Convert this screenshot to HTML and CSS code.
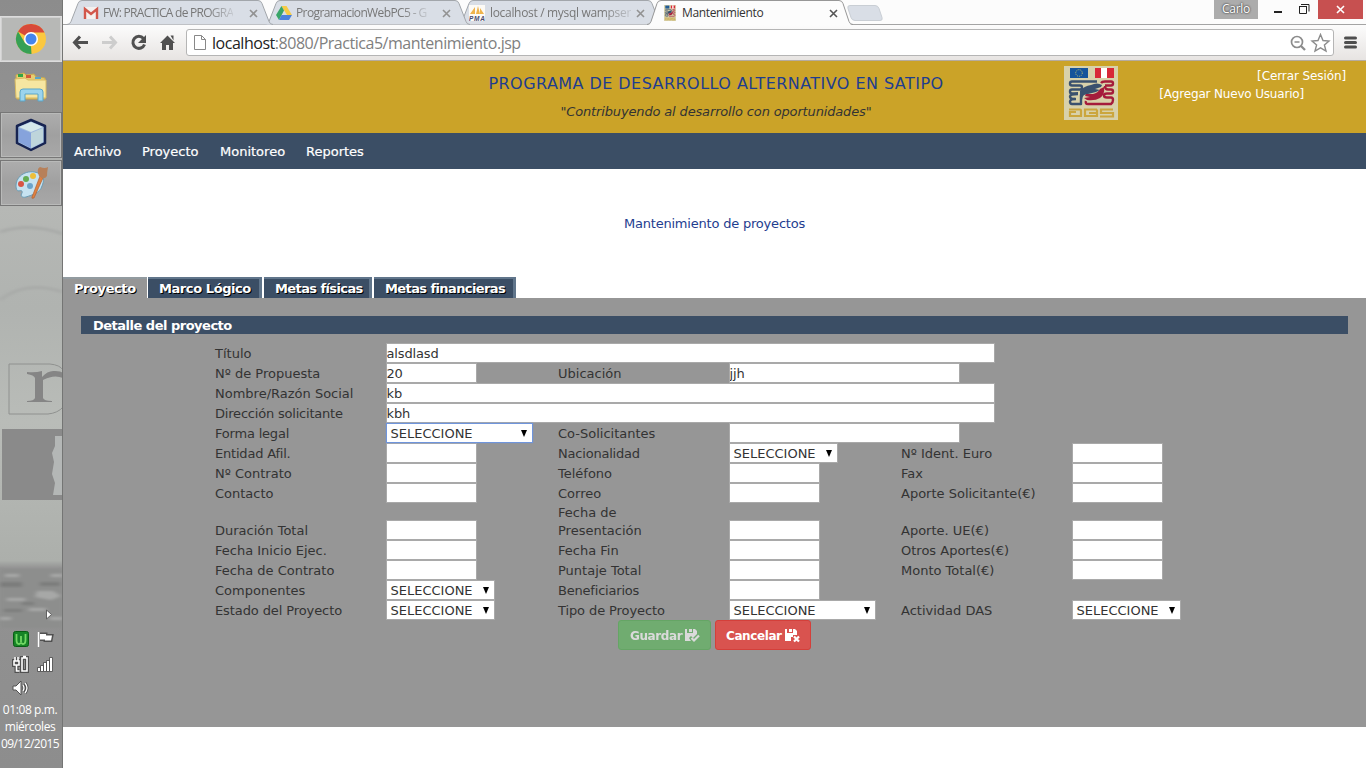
FILE: index.html
```html
<!DOCTYPE html>
<html lang="es">
<head>
<meta charset="utf-8">
<title>Mantenimiento</title>
<link rel="stylesheet" href="styles.css">
</head>
<body>
<aside class="taskbar">
  <svg class="wallpaper" viewBox="0 0 63 768" width="63" height="768">
    <defs>
      <linearGradient id="wp" x1="0" y1="0" x2="0" y2="1"><stop offset="0" stop-color="#8c8c8c"/><stop offset=".15" stop-color="#929292"/><stop offset=".17" stop-color="#adaeac"/><stop offset=".27" stop-color="#b6b8b5"/><stop offset=".4" stop-color="#b0b3b0"/><stop offset=".55" stop-color="#b9bcb8"/><stop offset=".73" stop-color="#acafab"/><stop offset=".74" stop-color="#929292"/><stop offset="1" stop-color="#8d8d8d"/></linearGradient>
      <filter id="soft" x="-20%" y="-50%" width="140%" height="200%"><feGaussianBlur stdDeviation="2.2 1"/></filter>
      <filter id="soft1"><feGaussianBlur stdDeviation=".5"/></filter>
    </defs>
    <rect width="63" height="768" fill="url(#wp)"/>
    <g fill="none" stroke="#a8aaa8" stroke-width="3" filter="url(#soft)"><path d="M0 232Q30 222 63 234M0 300Q25 280 63 292"/></g>
    <g filter="url(#soft1)">
      <path d="M9 364H50Q60 365 63 370M9 364V414H48Q58 413 63 407" fill="none" stroke="#8f918f"/>
      <path d="M27 372q8 1 15-1v6q6-7 13-6q6 0 8 2v5q-9-4-20 2v18q1 3 9 3v1H27v-1q7 0 8-3v-20q-1-3-8-4z" fill="#858585"/>
      <path d="M2 429H63V500H2z" fill="#8a8a8a"/>
      <path d="M55 436h8v59H53l2-12-3-9 2-12-2-9 3-7z" fill="#b4b7b6"/>
    </g>
    <g filter="url(#soft)">
      <path d="M0 569H63V628H0z" fill="#8d8e8d"/>
      <path d="M5 574h14v3H5zM51 574h12v3H51zM37 591h16l8 5-10 4-16-3zM7 598h18v3H7zM29 608h17v3H29zM0 617h11v3H0zM50 617h13v3H50z" fill="#a7a8a7"/>
      <path d="M0 582h22v5H0zM40 582h20v4H40zM22 602h12v3H22zM4 609h18v3H4z" fill="#7c7d7c"/>
    </g>
    <path d="M62.500 0V768" stroke="#747574"/>
  </svg>
  <div class="launchers">
    <div class="launcher launcher-active"><svg width="32" height="32" viewBox="0 0 32 32"><circle cx="16" cy="16" r="15" fill="#fbc840"/><path d="M16 16 3 8.500A15 15 0 0 1 29.500 9.500H16z" fill="#d84a3a"/><path d="M3 8.500 10 20l6 3.500L16.500 31A15 15 0 0 1 3 8.500z" fill="#36a055"/><circle cx="16" cy="16" r="7" fill="#fff"/><circle cx="16" cy="16" r="5.500" fill="#4585ec"/></svg></div>
    <div class="launcher launcher-plain"><svg width="34" height="32" viewBox="0 0 34 32"><path d="M2 4l8-2 2 2 8-1 2 3 9 1v21H3z" fill="#e8cd72" stroke="#c9a94c"/><path d="M4 3h5v3H4z" fill="#32a546"/><path d="M12 4h5v3h-5z" fill="#d35a3a"/><path d="M21 6h6v2h-6z" fill="#5ca5c7"/><path d="M1 8l10-1 3 2h18v18H2z" fill="#f6e6a1" stroke="#d8ba63"/><path d="M6 30V21q0-3 3-3h17q3 0 3 3v9h-5v-7H11v7z" fill="#9bd4ed" stroke="#5ba6c8"/></svg></div>
    <div class="launcher"><svg width="34" height="34" viewBox="0 0 34 34"><path d="M17 2 31 8V25L17 32 3 25V8z" fill="#9db8dc" stroke="#172452" stroke-width="2.500" stroke-linejoin="round"/><path d="M17 4 29 9 17 14 5 9z" fill="#d5e8eb"/><path d="M5 10 17 15V30L5 24z" fill="#86a3dc"/><path d="M17 15 29 10V24L17 30z" fill="#bed5db"/></svg></div>
    <div class="launcher"><svg width="34" height="34" viewBox="0 0 34 34"><path d="M2 20C2 9 14 3 24 7c7 3 6 8 4 13-2 7-10 9-16 11-4 1-6-1-4-4 1-2-1-3-3-2-2 0-3-2-3-5z" fill="#c6e2f0" stroke="#6a9cb5"/><circle cx="7" cy="18" r="3" fill="#d75546"/><circle cx="12" cy="13" r="3" fill="#65ad54"/><circle cx="19" cy="10" r="3" fill="#edbe39"/><circle cx="16" cy="20" r="3" fill="#6ca4ca"/><path d="M18 31 26 10 29 12 20 32q-3 1-2-1z" fill="#df8140" stroke="#a75a2d" stroke-width=".6"/><path d="M25 10q-3-7 1-9 5 2 8 0-1 5-1 9-2 3-5 2z" fill="#b7805a"/></svg></div>
  </div>
  <div class="tray">
    <svg width="63" height="100" viewBox="0 0 63 100">
      <path d="M46.500 10v9l5-4.500z" fill="#fff" stroke="#606060"/>
      <rect x="13.500" y="31.500" width="15" height="15" rx="2" fill="#168426" stroke="#075d13"/><path d="M16.500 34v6q0 4 2.500 4l2-1 2 1q2.500 0 2.500-4v-6M21 36v6" fill="none" stroke="#72d764" stroke-width="1.800"/>
      <path d="M38.500 32v15M40 34h6v1.500h6l-1 5h-6v-1h-5" fill="#fff" stroke="#505050" stroke-width="3"/><path d="M38.500 32v15" stroke="#fff" stroke-width="2"/><path d="M40 34h6v1.500h6l-1 5h-6v-1h-5z" fill="#fff"/>
      <g fill="none" stroke="#505050" stroke-width="4"><path d="M22 58h5v13h-5zM16.500 57v4M14 61h5v4h-5zM16.500 65v6h3"/></g><g fill="none" stroke="#fff" stroke-width="1.600"><path d="M22 58h5v13h-5zM23 56.500h3M15 57v4M18 57v4M14 61h5v4h-5zM16.500 65v6h3"/></g>
      <path d="M38 68h2v3h-2zM41 66h2v5h-2zM44 63h2v8h-2zM47 61h2v10h-2zM50 58h2v13h-2z" fill="#fff" stroke="#4f4f4f" stroke-width="1.500" paint-order="stroke"/>
      <path d="M13 86h3l5-5v14l-5-5h-3z" fill="#fff" stroke="#505050"/><path d="M23 85q2 3 0 6M25 83q4 5 0 10" fill="none" stroke="#505050" stroke-width="3"/><path d="M23 85q2 3 0 6M25 83q4 5 0 10" fill="none" stroke="#fff" stroke-width="1.300"/>
    </svg>
    <div class="clock"><span class="c1">01:08 p.m.</span><span class="c2">miércoles</span><span class="c3">09/12/2015</span></div>
  </div>
</aside>
<div class="window">
  <div class="tabstrip">
    <svg class="tab-shapes" width="1303" height="25" viewBox="0 0 1303 25">
      <path d="M0 24.500H1303" stroke="#a4a4a4"/>
      <g fill="#d9dee6" stroke="#a2a6ab">
        <path d="M395 24.500q3 0 4-3l7-18q1-3 4-3h175q3 0 4 3l7 18q1 3 4 3"/>
        <path d="M202 24.500q3 0 4-3l7-18q1-3 4-3h175q3 0 4 3l7 18q1 3 4 3"/>
        <path d="M4 24.500q3 0 4-3l7-18q1-3 4-3h176q3 0 4 3l7 18q1 3 4 3"/>
        <path d="M787 5.500h25q3 0 4 3l3 9q1 3-2 3h-25q-3 0-4-3l-3-9q-1-3 2-3z" stroke="#c9ced4"/>
      </g>
      <path d="M584 25q3 0 4-3l6-18q1-3.500 4-3.500h178q3 0 4 3.500l6 18q1 3 4 3z" fill="#fcfcfc"/>
      <path d="M584 24.500q3 0 4-3l6-18q1-3 4-3h178q3 0 4 3l6 18q1 3 4 3" fill="none" stroke="#979797"/>
    </svg>
    <div class="tab t1"><svg width="16" height="14" viewBox="0 0 16 14"><path d="M1 1h14v12H1z" fill="#f4f0ee"/><path d="M2 13V3l6 5 6-5v10" fill="none" stroke="#d2574b" stroke-width="2.400"/></svg><span class="tab-title fade tx1">FW: PRACTICA de PROGRA</span><svg class="x" width="9" height="9" viewBox="0 0 9 9"><path d="M1 1l7 7M8 1 1 8"/></svg></div>
    <div class="tab t2"><svg width="16" height="14" viewBox="0 0 16 14"><path d="M5.500 0h5L16 9h-5z" fill="#f7cb45"/><path d="M5.500 0 8 4.500 3 14 0 9z" fill="#39a568"/><path d="M5.500 9H16l-3 5H3z" fill="#4c82dc"/></svg><span class="tab-title fade tx2">ProgramacionWebPC5 - G</span><svg class="x" width="9" height="9" viewBox="0 0 9 9"><path d="M1 1l7 7M8 1 1 8"/></svg></div>
    <div class="tab t3"><svg width="16" height="16" viewBox="0 0 16 16"><path d="M0 0h16v16H0z" fill="#fcfaf5"/><path d="M1 9 6 2v7zM7 9l2-8 2 8zM11 9V3l4 6z" fill="#efb34b"/><text x="0" y="15.500" font-size="6.500" font-weight="700" font-style="italic" font-family="Liberation Sans" textLength="16" fill="#484a70">PMA</text></svg><span class="tab-title fade tx3">localhost / mysql wampser</span><svg class="x" width="9" height="9" viewBox="0 0 9 9"><path d="M1 1l7 7M8 1 1 8"/></svg></div>
    <div class="tab t4"><svg width="12" height="16" viewBox="0 0 54 54" preserveAspectRatio="none"><use href="#das"/></svg><span class="tab-title tx4">Mantenimiento</span><svg class="x" width="9" height="9" viewBox="0 0 9 9"><path d="M1 1l7 7M8 1 1 8"/></svg></div>
    <div class="win-controls"><span class="user">Carlo</span>
      <svg width="60" height="19" viewBox="0 0 60 19"><path d="M16 11h8v2h-8z" fill="#222"/><path d="M41.500 6.500h7v7h-7zM41 6.500h8M43 4.500h8v7" fill="none" stroke="#222"/></svg>
      <span class="win-close"><svg width="9" height="9" viewBox="0 0 9 9"><path d="M1 1l7 7M8 1 1 8" stroke="#fff" stroke-width="1.600"/></svg></span></div>
  </div>
  <div class="toolbar">
    <svg width="123" height="35" viewBox="0 0 123 35"><g fill="none" stroke="#505050" stroke-width="3"><path d="M11 17.500h14M17 11.500l-5.500 6 5.500 6"/><path d="M39 17.500h14M47 11.500l5.500 6-5.500 6" stroke="#cdcdcd"/><path d="M80.500 13.500a6 6 0 1 0 1 6"/></g><path d="M83 10v8h-8z" fill="#505050"/><path d="M104.500 10.500 112 18h-2v7h-4v-5h-3v5h-4v-7h-2zM107.500 10.500h3v5z" fill="#505050"/></svg>
    <div class="omnibox"><svg width="12" height="15" viewBox="0 0 12 15"><path d="M.5.500h7l4 4v10H.5zM7.500.500v4h4" fill="#fff" stroke="#888"/></svg><span class="url"><b>localhost</b>:8080/Practica5/mantenimiento.jsp</span>
      <svg class="omni-end" width="42" height="20" viewBox="0 0 42 20"><g fill="none" stroke="#8c8c8c"><circle cx="8" cy="9" r="5.500" stroke-width="1.700"/><path d="M12 13l4 4" stroke-width="2.300"/><path d="M5.500 9h5" stroke-width="1.500"/><path d="M31.500 1.500 34 7.500l6 .5-4.600 4 1.600 6-5.500-3.200L26 18l1.600-6L23 8l6-.5z" stroke-width="1.400"/></g></svg>
    </div>
    <svg width="32" height="35" viewBox="0 0 32 35"><path d="M11.500 13h10M11.500 17.500h10M11.500 22h10" stroke="#4e4e4e" stroke-width="3" stroke-linecap="round"/></svg>
  </div>
  <header class="banner">
    <div class="brand"><h1>PROGRAMA DE DESARROLLO ALTERNATIVO EN SATIPO</h1><p>"Contribuyendo al desarrollo con oportunidades"</p></div>
    <svg class="logo" width="54" height="54" viewBox="0 0 54 54"><g id="das"><path d="M0 0h54v54H0z" fill="#d8d1aa"/><path d="M6 2h18v10H6z" fill="#15549b"/><circle cx="15" cy="7" r="3.300" fill="none" stroke="#c3c36a" stroke-dasharray="1 1.070"/><path d="M31 2h19v10H31z" fill="#fff"/><path d="M31 2h6v10h-6zM43 2h7v10h-7z" fill="#d82837"/>
      <g fill="none" stroke-width="2.400" stroke-linejoin="round">
        <path d="M33 15.500H8q-2 0-2 2t2 2h8q2 0 2 2t-2 2H8q-2 0-2 2t2 2h6M14 28q-8 0-8 2.500t4 2.500h1M12 33q-6 0-6 2.500T8 38h9v-9q0-5 6-6" stroke="#3a516e"/>
        <path d="M37 17q1-1.500 4-1.500h6q2 0 2 2t-2 2h-6M41 20q0 3.500 3 3.500h3q2 0 2 2t-2 2h-4q-3 0-3 2t3 2h4q2 0 2 2.500T47 38H24q-3 0-2-3" stroke="#a51c3b"/>
      </g>
      <path d="M16 25q4-5 11-6 6-3 11 0l-1 2-6 2 5 1-4 2-12 3q-2 2-2 5h-2z" fill="#3a516e"/>
      <path d="M40 21q1 8-4 11-5 3-13 2l-3-2 6-1-5-1 1-2 7 0q5-1 7-5z" fill="#a51c3b"/>
      <path d="M5 43.500h11q1 0 1 1v5.500H6v-4h6M33 43.500H21v6.500h12v-6.500M25 47h8M49 43.500H37V47h12v3.500H36" fill="none" stroke="#cba63d" stroke-width="2.200"/></g></svg>
    <div class="session"><a class="a1">[Cerrar Sesión]</a><a class="a2">[Agregar Nuevo Usuario]</a></div>
  </header>
  <nav class="menu"><a class="m1">Archivo</a><a class="m2">Proyecto</a><a class="m3">Monitoreo</a><a class="m4">Reportes</a></nav>
  <section class="heading">Mantenimiento de proyectos</section>
  <div class="page-tabs"><span class="pt current">Proyecto</span><span class="pt w2">Marco Lógico</span><span class="pt w3">Metas físicas</span><span class="pt w4">Metas financieras</span></div>
  <main class="panel">
    <h2>Detalle del proyecto</h2>
    <form class="fields">
      <label>Título</label><input class="full" value="alsdlasd">
      <label>Nº de Propuesta</label><input value="20"><label>Ubicación</label><input class="wide" value="jjh">
      <label>Nombre/Razón Social</label><input class="full" value="kb">
      <label class="tight">Dirección solicitante</label><input class="full" value="kbh">
      <label class="tight">Forma legal</label><div class="select big focus">SELECCIONE<i></i></div><label>Co-Solicitantes</label><input class="wide">
      <label class="tight">Entidad Afil.</label><input><label class="tight">Nacionalidad</label><div class="select">SELECCIONE<i></i></div><label>Nº Ident. Euro</label><input>
      <label>Nº Contrato</label><input><label>Teléfono</label><input><label>Fax</label><input>
      <label>Contacto</label><input><label>Correo</label><input><label>Aporte Solicitante(€)</label><input>
      <label>Duración Total</label><input><label class="two">Fecha de<br>Presentación</label><input><label>Aporte. UE(€)</label><input>
      <label>Fecha Inicio Ejec.</label><input><label>Fecha Fin</label><input><label>Otros Aportes(€)</label><input>
      <label>Fecha de Contrato</label><input><label>Puntaje Total</label><input><label>Monto Total(€)</label><input>
      <label>Componentes</label><div class="select">SELECCIONE<i></i></div><label class="tight">Beneficiarios</label><input class="last">
      <label class="snug">Estado del Proyecto</label><div class="select">SELECCIONE<i></i></div><label class="snug">Tipo de Proyecto</label><div class="select big">SELECCIONE<i></i></div><label>Actividad DAS</label><div class="select">SELECCIONE<i></i></div>
    </form>
    <div class="actions">
      <button class="btn save"><span>Guardar</span><svg width="15" height="14" viewBox="0 0 15 14"><path d="M0 0h2v4h6V0h2l2 2v3L8 9 6 7 4 9l2 3H0zM4 0h3v3H4z" fill="#fff"/><path d="M6.500 9l2.500 2.500 5-5" fill="none" stroke="#fff" stroke-width="2.200"/></svg></button>
      <button class="btn cancel"><span>Cancelar</span><svg width="15" height="14" viewBox="0 0 15 14"><path d="M0 0h2v4h6V0h2l2 2v4H8v2H6v4H0zM4 0h3v3H4z" fill="#fff"/><path d="M9 7.500l5 5M14 7.500l-5 5" stroke="#fff" stroke-width="2.200"/></svg></button>
    </div>
  </main>
</div>
</body>
</html>
```
FILE: styles.css
```css
* { box-sizing: border-box; }
body { margin: 0; width: 1366px; height: 768px; overflow: hidden; display: flex; background: #fff; font: 13px/18px "DejaVu Sans", Verdana, sans-serif; color: #333; }
svg { display: block; flex: none; }
span, a { white-space: nowrap; }
.taskbar { position: relative; width: 63px; height: 768px; flex: none; display: flex; flex-direction: column; justify-content: space-between; }
.wallpaper { position: absolute; inset: 0; }
.launchers { position: relative; padding-top: 16px; width: 62px; display: flex; flex-direction: column; gap: 2px; }
.launcher { height: 46px; display: flex; align-items: center; justify-content: center; border: 1px solid #777; box-shadow: inset 0 0 0 1px #b9bab9; background: linear-gradient(#adadad, #a0a0a0 50%, #a8a8a8); }
.launcher-active { border-color: #dcdcdc; box-shadow: inset 0 0 0 1px #d0d0d0; background: #b7b8b6; }
.launcher-plain { border-color: transparent; box-shadow: none; background: none; }
.tray { position: relative; }
.clock { height: 68px; padding-top: 1px; color: #fff; font: 12px/17px "Open Sans", sans-serif; display: flex; flex-direction: column; align-items: center; width: 60px; }
.c1, .c2 { letter-spacing: -.4px; }
.c3 { letter-spacing: -.55px; }
.window { flex: 1; min-width: 0; display: flex; flex-direction: column; }
.tabstrip { position: relative; height: 25px; background: #fcfcfc; display: flex; font: 12px/18px "Open Sans", sans-serif; color: #777; }
.tab-shapes { position: absolute; left: 0; top: 0; }
.tab { position: relative; height: 25px; padding: 1px 0 0 20px; display: flex; align-items: center; gap: 4px; }
.t1 { width: 193px; }
.t2 { width: 193px; }
.t3 { width: 194px; gap: 5px; }
.t4 { width: 208px; color: #333; gap: 6px; padding-left: 21px; }
.tab-title { flex: none; }
.fade { -webkit-mask-image: linear-gradient(90deg, #000 80%, rgba(0,0,0,.2)); mask-image: linear-gradient(90deg, #000 80%, rgba(0,0,0,.2)); }
.x { fill: none; stroke: #929292; stroke-width: 1.600; margin-left: auto; margin-right: -2px; }
.t4 .x { stroke: #555; margin-right: 13px; }
.tx1 { letter-spacing: -.73px; }
.tx2 { letter-spacing: -.62px; }
.tx3 { letter-spacing: -.32px; }
.tx4 { letter-spacing: -.36px; }
.win-controls { position: relative; margin: 0 3px 0 auto; display: flex; height: 19px; }
.user { width: 44px; background: #acacac; color: #fff; text-align: center; text-shadow: 0 0 2px #444, 0 0 2px #444; letter-spacing: -.3px; }
.win-close { width: 45px; background: #c75050; display: flex; align-items: center; justify-content: center; }
.toolbar { height: 36px; display: flex; align-items: flex-start; background: linear-gradient(#fcfcfc, #e7e4e2); border-bottom: 1px solid #b5aba0; }
.omnibox { flex: 1; margin-top: 4px; height: 27px; background: #fff; border: 1px solid #b5b5b5; border-radius: 3px; display: flex; align-items: center; padding: 0 2px 0 7px; gap: 6px; font: 16px/22px "Open Sans", sans-serif; color: #808080; }
.url { letter-spacing: -.47px; }
.url b { font-weight: 400; color: #222; }
.omni-end { margin-left: auto; }
.banner { position: relative; height: 72px; background: #cba328; display: flex; justify-content: center; }
.brand { text-align: center; width: 560px; margin-left: 3px; white-space: nowrap; }
.brand h1 { margin: 12px 0 0; font-size: 16px; line-height: 22px; font-weight: 400; color: #1e3d8f; letter-spacing: .45px; }
.brand p { margin: 8px 0 0; font-style: italic; letter-spacing: -.15px; }
.logo { position: absolute; left: 1001px; top: 5px; }
.session { position: absolute; right: 20px; top: 6px; color: #fff; display: flex; flex-direction: column; align-items: flex-end; font-size: 12px; }
.a1 { letter-spacing: -.1px; }
.a2 { margin-right: 42px; letter-spacing: -.18px; }
.menu { height: 36px; background: #3b4e65; color: #fff; display: flex; align-items: center; padding: 2px 0 0 11px; -webkit-text-stroke: .2px #fff; }
.m1 { width: 68px; letter-spacing: -.25px; }
.m2 { width: 78px; }
.m3 { width: 86px; }
.heading { height: 108px; display: flex; align-items: center; justify-content: center; color: #1e3d8f; padding-top: 1px; letter-spacing: -.2px; }
.page-tabs { display: flex; gap: 2px; height: 21px; color: #fff; font-weight: 700; text-shadow: 1px 1px 0 #000; }
.pt { padding: 0 0 0 11px; background: #3b4e65; border-top: 2px solid #60758b; border-right: 3px solid #60758b; line-height: 19px; letter-spacing: -.42px; }
.pt.current { width: 84px; margin-right: -1px; background: #969696; border-top-color: #929ba0; border-right: 0; }
.w2 { width: 114px; }
.w3 { width: 108px; letter-spacing: -.6px; }
.w4 { width: 142px; letter-spacing: -.6px; }
.panel { height: 429px; background: #969696; padding: 18px; }
.panel h2 { margin: 0 0 9px; height: 18px; background: #3b4e65; color: #fff; font-size: 13px; line-height: 19px; padding-left: 12px; letter-spacing: -.5px; }
.fields { width: 1029px; margin: 0 0 0 119px; display: grid; grid-template-columns: repeat(6, 171.5px); grid-template-rows: repeat(8, 20px) 37px repeat(4, 20px); align-items: end; }
.fields label { height: 18px; padding-left: 15px; }
.fields .two { height: 36px; }
.tight { letter-spacing: -.2px; }
.snug { letter-spacing: -.1px; }
input, .select { margin: 0 0 0 14px; height: 20px; width: 91px; padding: 1px 0 0; border: 1px solid #a9a9a9; background: #fff; font: inherit; color: #333; outline: 0; }
input { letter-spacing: -.15px; }
.full { grid-column: span 5; width: 609px; }
.wide { grid-column: span 3; width: 231px; }
.last { grid-column: span 3; }
.select { position: relative; width: 109px; padding: 0 0 0 4px; line-height: 19px; white-space: nowrap; }
.big { width: 147px; }
.focus { z-index: 1; border-color: #6f95dc; box-shadow: 0 0 1px #6f95dc; }
.select i { position: absolute; right: 5px; top: 6px; border: 3.500px solid transparent; border-top: 7px solid #000; border-bottom: 0; }
.actions { display: flex; justify-content: center; gap: 4px; }
.btn { height: 30px; border-radius: 3px; border: 1px solid; padding: 1px 0 0 11px; display: flex; align-items: center; gap: 3px; color: #fff; font: 700 12px/18px "DejaVu Sans", sans-serif; letter-spacing: -.4px; }
.save { width: 93px; background: #5cb85c; border-color: #4cae4c; opacity: .65; }
.cancel { width: 96px; background: #d9534f; border-color: #d43f3a; padding-left: 10px; }
```
